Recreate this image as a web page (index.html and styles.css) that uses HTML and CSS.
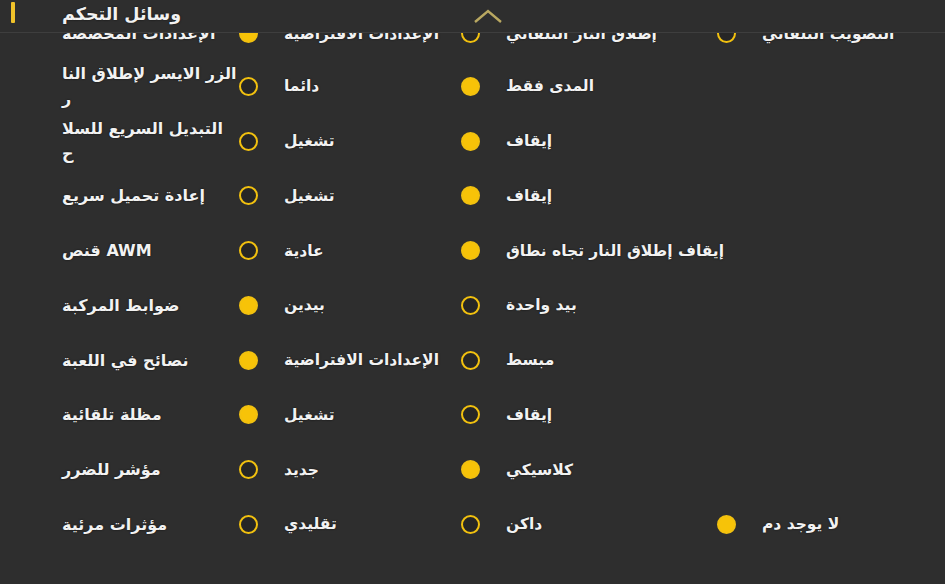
FILE: index.html
```
<!DOCTYPE html>
<html lang="ar">
<head>
    <meta charset="UTF-8">
    <meta name="viewport" content="width=device-width, initial-scale=1.0">
    <title>وسائل التحكم</title>
    <link rel="stylesheet" href="styles.css">
</head>
<body>
    <div class="panel">
        <div class="panel-head">
            <span class="accent"></span>
            <h2>وسائل التحكم</h2>
            <svg class="chevron" width="30" height="16" viewBox="0 0 30 16">
                <polyline points="2,14 15,3 28,14" fill="none" stroke="#b9a861" stroke-width="2.4"/>
            </svg>
        </div>

        <!-- Settings rows -->
        <div class="rows">
            <div class="row">
                <div class="label">الإعدادات المخصصة</div>
                <div class="opt on"><span class="dot"></span><span>الإعدادات الافتراضية</span></div>
                <div class="opt"><span class="dot"></span><span>إطلاق النار التلقائي</span></div>
                <div class="opt"><span class="dot"></span><span>التصويب التلقائي</span></div>
            </div>
            <div class="row">
                <div class="label">الزر الايسر لإطلاق النا<br>ر</div>
                <div class="opt"><span class="dot"></span><span>دائما</span></div>
                <div class="opt on"><span class="dot"></span><span>المدى فقط</span></div>
            </div>
            <div class="row">
                <div class="label">التبديل السريع للسلا<br>ح</div>
                <div class="opt"><span class="dot"></span><span>تشغيل</span></div>
                <div class="opt on"><span class="dot"></span><span>إيقاف</span></div>
            </div>
            <div class="row">
                <div class="label">إعادة تحميل سريع</div>
                <div class="opt"><span class="dot"></span><span>تشغيل</span></div>
                <div class="opt on"><span class="dot"></span><span>إيقاف</span></div>
            </div>
            <div class="row">
                <div class="label">قنص AWM</div>
                <div class="opt"><span class="dot"></span><span>عادية</span></div>
                <div class="opt on"><span class="dot"></span><span>إيقاف إطلاق النار تجاه نطاق</span></div>
            </div>
            <div class="row">
                <div class="label">ضوابط المركبة</div>
                <div class="opt on"><span class="dot"></span><span>بيدين</span></div>
                <div class="opt"><span class="dot"></span><span>بيد واحدة</span></div>
            </div>
            <div class="row">
                <div class="label">نصائح في اللعبة</div>
                <div class="opt on"><span class="dot"></span><span>الإعدادات الافتراضية</span></div>
                <div class="opt"><span class="dot"></span><span>مبسط</span></div>
            </div>
            <div class="row">
                <div class="label">مظلة تلقائية</div>
                <div class="opt on"><span class="dot"></span><span>تشغيل</span></div>
                <div class="opt"><span class="dot"></span><span>إيقاف</span></div>
            </div>
            <div class="row">
                <div class="label">مؤشر للضرر</div>
                <div class="opt"><span class="dot"></span><span>جديد</span></div>
                <div class="opt on"><span class="dot"></span><span>كلاسيكي</span></div>
            </div>
            <div class="row">
                <div class="label">مؤثرات مرئية</div>
                <div class="opt"><span class="dot"></span><span>تقليدي</span></div>
                <div class="opt"><span class="dot"></span><span>داكن</span></div>
                <div class="opt on"><span class="dot"></span><span>لا يوجد دم</span></div>
            </div>
        </div>
    </div>
</body>
</html>
```

FILE: styles.css
```
body {
    margin: 0;
    background-color: #2e2e2e;
    font-family: "DejaVu Sans", sans-serif;
    color: #f2f2f2;
    overflow: hidden;
}
.panel {
    position: relative;
    height: 584px;
    overflow: hidden;
}
.panel-head {
    position: absolute;
    top: 0;
    left: 0;
    right: 0;
    height: 32px;
    display: grid;
    grid-template-columns: 51px 411px 30px;
    align-items: center;
    padding-left: 11px;
    background-color: #2e2e2e;
    border-bottom: 1px solid #3e3e3e;
    z-index: 2;
}
.accent {
    width: 4px;
    height: 21px;
    margin-top: -8px;
    background-color: #f0c22a;
    border-radius: 1px;
}
.panel-head h2 {
    margin: 0 0 4px 0;
    font-size: 17.5px;
    font-weight: bold;
    direction: ltr;
    text-align: left;
    text-shadow: 0 0 2px rgba(0, 0, 0, 0.7);
}
.chevron {
    display: block;
}
.rows {
    padding-top: 8px;
    padding-left: 62px;
}
.row {
    display: grid;
    grid-template-columns: 176px 222px 256px 1fr;
    align-items: center;
    height: 54.75px;
}
.row:first-child {
    height: 51px;
}
.label {
    width: 176px;
    font-size: 16px;
    font-weight: bold;
    line-height: 25px;
    text-align: left;
    text-shadow: 0 0 2px rgba(0, 0, 0, 0.7);
}
.opt {
    display: flex;
    align-items: center;
    font-size: 15.5px;
    font-weight: bold;
    white-space: nowrap;
    text-shadow: 0 0 2px rgba(0, 0, 0, 0.7);
}
.dot {
    width: 15px;
    height: 15px;
    margin-left: 1px;
    margin-right: 26px;
    border: 2.5px solid #f2c10f;
    border-radius: 50%;
    background-color: #262626;
    flex-shrink: 0;
}
.opt.on .dot {
    background-color: #f7c308;
}
```
